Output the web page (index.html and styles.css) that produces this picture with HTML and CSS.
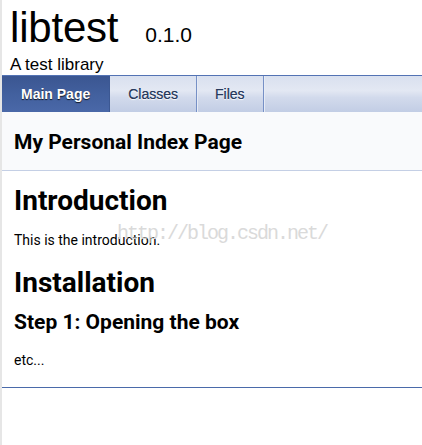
FILE: index.html
```html
<!DOCTYPE html>
<html>
<head>
<meta charset="utf-8">
<title>libtest: My Personal Index Page</title>
<link rel="stylesheet" href="styles.css">
</head>
<body>
<div class="page">
  <div class="titlearea">
    <div class="projectrow">
      <span class="projectname">libtest</span>
      <span class="projectnumber">0.1.0</span>
    </div>
    <div class="projectbrief">A test library</div>
  </div>
  <nav class="tabs">
    <a class="tab current" href="#">Main Page</a>
    <a class="tab" href="#">Classes</a>
    <a class="tab" href="#">Files</a>
  </nav>
  <div class="header">
    <div class="headertitle">My Personal Index Page</div>
  </div>
  <div class="contents">
    <h1 class="h-intro">Introduction</h1>
    <p class="p-intro">This is the introduction.</p>
    <h1 class="h-install">Installation</h1>
    <h2 class="h-step">Step 1: Opening the box</h2>
    <p class="p-etc">etc...</p>
  </div>
  <hr class="footer-rule">
  <div class="watermark">http://blog.csdn.net/</div>
</div>
</body>
</html>
```
FILE: styles.css
```css
html, body {
  margin: 0;
  padding: 0;
  background: #ffffff;
}

.page {
  position: relative;
  min-height: 445px;
  border-left: 2px solid #e6e6e6;
  font-family: Roboto, "Liberation Sans", sans-serif;
  color: #000;
}

.titlearea {
  padding: 8px 0 1px 8px;
  border-bottom: 1px solid #5373b4;
}

.projectrow {
  display: flex;
  align-items: baseline;
  gap: 27px;
}

.projectname {
  font: 42px/40px "Liberation Sans", Arial, sans-serif;
  letter-spacing: -0.2px;
}

.projectnumber {
  font: 21px/24px "Liberation Sans", Arial, sans-serif;
}

.projectbrief {
  margin-top: 8px;
  font: 17px/18px "Liberation Sans", Arial, sans-serif;
}

.tabs {
  display: flex;
  height: 36px;
  background: linear-gradient(#d9e0ef 0%, #e3e8f3 40%, #d2daec 60%, #c2cde5 100%);
}

.tab {
  display: block;
  padding: 0 18px;
  font: 14px/36px "Liberation Sans", Arial, sans-serif;
  color: #283a5d;
  text-decoration: none;
  text-shadow: 0 1px 1px rgba(255, 255, 255, 0.9), 0 0 0.4px #283a5d;
  border-right: 1px solid #7690c6;
  box-shadow: 1px 0 0 #e6ebf5;
}

.tab.current {
  padding: 0 19px;
  color: #fff;
  font-weight: bold;
  text-shadow: 0 1px 1px rgba(0, 0, 0, 0.8);
  background: linear-gradient(#3b5691, #42609e 50%, #4a68a8);
  border-right: 1px solid #3c5893;
  box-shadow: none;
}

.header {
  background: #f9fafc;
  border-bottom: 1px solid #c4cfe5;
  padding: 16px 0 14px 12px;
}

.headertitle {
  font: bold 21px/28px Roboto, sans-serif;
}

.contents {
  padding-left: 12px;
}

.contents h1,
.contents h2,
.contents p {
  margin: 0;
}

.contents h1 {
  font: bold 28px/34px Roboto, sans-serif;
}

.contents h2 {
  font: bold 21px/28px Roboto, sans-serif;
}

.contents p {
  font: 14px/20px Roboto, sans-serif;
}

.h-intro { margin-top: 13px !important; }
.p-intro { margin-top: 12px !important; }
.h-install { margin-top: 16px !important; }
.h-step { margin-top: 8px !important; }
.p-etc { margin-top: 14px !important; }

.footer-rule {
  margin: 17px 0 0 0;
  border: 0;
  border-top: 1px solid #4a6aaa;
  height: 0;
}

.watermark {
  position: absolute;
  left: 115px;
  top: 223px;
  font: 20px/22px "Liberation Mono", monospace;
  letter-spacing: -2px;
  color: #dadada;
  pointer-events: none;
}
```
